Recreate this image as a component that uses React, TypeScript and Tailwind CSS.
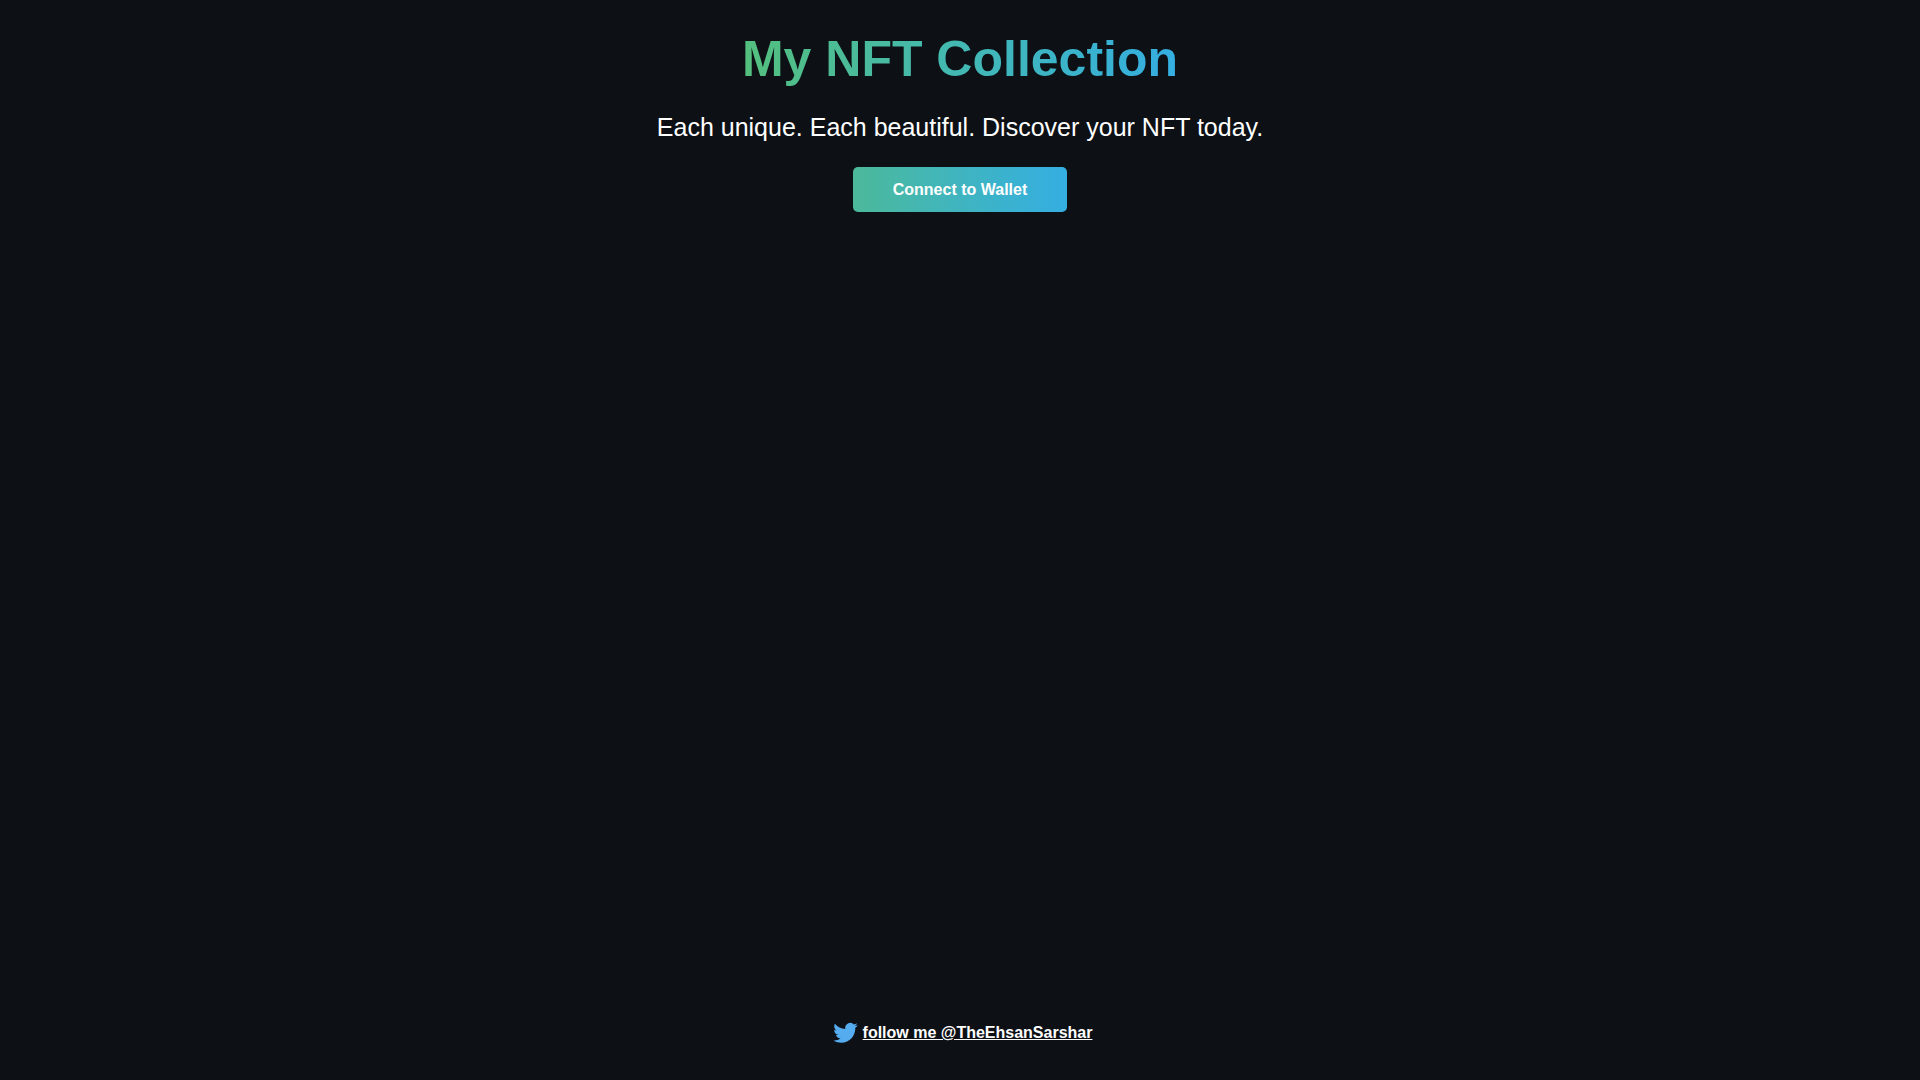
const TWITTER_HANDLE = 'TheEhsanSarshar'
const TWITTER_LINK = `https://twitter.com/${TWITTER_HANDLE}`

function TwitterLogo() {
  return (
    <svg
      className="h-6 w-6 shrink-0"
      viewBox="83 92 244 220"
      aria-hidden="true"
    >
      <path
        fill="#55acee"
        d="M153.62 301.59c94.34 0 145.94-78.16 145.94-145.94 0-2.22 0-4.43-.15-6.63A104.36 104.36 0 0 0 325 122.47a102.38 102.38 0 0 1-29.46 8.07 51.47 51.47 0 0 0 22.55-28.37 102.79 102.79 0 0 1-32.57 12.45 51.34 51.34 0 0 0-87.41 46.78A145.62 145.62 0 0 1 92.4 107.81a51.33 51.33 0 0 0 15.88 68.47A50.91 50.91 0 0 1 85 169.86v.65a51.31 51.31 0 0 0 41.15 50.28 51.21 51.21 0 0 1-23.16.88 51.35 51.35 0 0 0 47.92 35.62 102.92 102.92 0 0 1-63.7 22 104.41 104.41 0 0 1-12.21-.74 145.21 145.21 0 0 0 78.62 23"
      />
    </svg>
  )
}

export default function App() {
  return (
    <div className="flex min-h-screen flex-col bg-[#0d1116] px-4 text-center font-['Liberation_Sans',Arial,sans-serif] text-white">
      <main className="flex flex-1 flex-col items-center pt-[30px]">
        <h1 className="bg-linear-to-r from-[#54bf7d] to-[#35aee2] bg-clip-text text-[50px] leading-[58px] font-bold text-transparent">
          My NFT Collection
        </h1>
        <p className="mt-[25px] text-[25px] leading-[29px]">
          Each unique. Each beautiful. Discover your NFT today.
        </p>
        <button
          type="button"
          className="mt-[25px] h-[45px] cursor-pointer rounded-[5px] bg-linear-to-r from-[#4cb99a] to-[#35aee2] px-10 text-base font-bold"
        >
          Connect to Wallet
        </button>
      </main>
      <footer className="flex items-center justify-center gap-[5px] pb-[35px] pl-[6px]">
        <TwitterLogo />
        <a href={TWITTER_LINK} className="text-base font-bold underline" target="_blank" rel="noreferrer">
          {`follow me @${TWITTER_HANDLE}`}
        </a>
      </footer>
    </div>
  )
}
